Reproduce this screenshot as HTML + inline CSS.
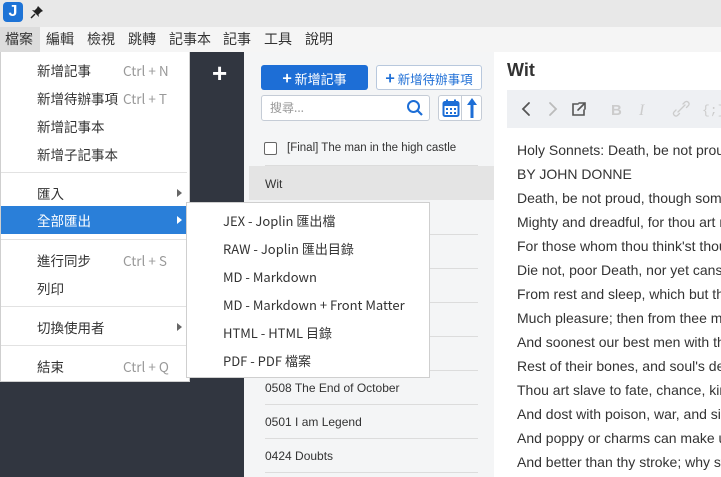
<!DOCTYPE html>
<html><head><meta charset="utf-8"><style>
*{margin:0;padding:0;box-sizing:border-box}
body{width:721px;height:477px;overflow:hidden;position:relative;background:#fff;font-family:"Liberation Sans","Noto Sans CJK TC",sans-serif}
.abs{position:absolute}
.menu{font-family:"Noto Sans CJK TC","Liberation Sans",sans-serif;font-size:13.5px;color:#333}
.mi{position:absolute;left:0;height:28px;line-height:28px;padding-left:36px;white-space:nowrap}
.sc{position:absolute;left:122px;color:#999}
.sep{position:absolute;left:0;height:1px;background:#e2e2e2}
.arr{position:absolute;left:176px;width:0;height:0;border-left:5px solid #666;border-top:4px solid transparent;border-bottom:4px solid transparent}
.row{position:absolute;left:265px;width:213px;height:1px;background:#dcdcdc}
.nt{position:absolute;left:265px;font-size:12px;color:#333;white-space:nowrap}
.ed{position:absolute;left:23px;font-size:14px;color:#333;white-space:nowrap;line-height:24px}
.mb span{position:absolute;white-space:nowrap}
</style></head><body>
<div class="abs" style="left:0;top:0;width:721px;height:27px;background:#e8e8e8"></div>
<div class="abs" style="left:3px;top:2px;width:20px;height:20px;background:#1d73d6;border-radius:4px;color:#fff;font:bold 16px 'Liberation Sans';text-align:center;line-height:20px">J</div>
<svg class="abs" style="left:30px;top:5px" width="14" height="14"><path d="M8 1 L13 6 L11 7 L8.5 9.5 L9 12 L2 5 L4.5 5.5 L7 3 Z" fill="#222"/><line x1="5" y1="9" x2="1" y2="13" stroke="#222" stroke-width="1.5"/></svg>
<div class="abs" style="left:0;top:27px;width:721px;height:25px;background:#f5f5f5"></div>
<div class="abs" style="left:0;top:27px;width:40px;height:25px;background:#dcdcdc"></div>
<div class="abs menu mb" style="top:29px;left:5px;font-size:14px;width:400px;height:20px">
<span style="left:0">檔案</span><span style="left:41px">編輯</span><span style="left:82px">檢視</span><span style="left:123px">跳轉</span><span style="left:164px">記事本</span><span style="left:218px">記事</span><span style="left:259px">工具</span><span style="left:300px">說明</span></div>
<div class="abs" style="left:0;top:52px;width:244px;height:425px;background:#313640"></div>
<div class="abs" style="left:212px;top:58px;color:#fff;font:bold 26px 'Liberation Sans';line-height:30px">+</div>
<div class="abs" style="left:244px;top:52px;width:5px;height:425px;background:#f4f5f6"></div>
<div class="abs" style="left:249px;top:52px;width:245px;height:425px;background:#f4f5f6"></div>
<div class="abs" style="left:261px;top:65px;width:107px;height:25px;background:#1d6ed6;border-radius:3px;color:#fff;font-size:13px;line-height:25px;text-align:center;font-family:'Noto Sans CJK TC',sans-serif;white-space:nowrap"><b style="font-size:16px">+</b> 新增記事</div>
<div class="abs" style="left:376px;top:65px;width:106px;height:25px;background:#fff;border:1px solid #b8c8dd;border-radius:3px;color:#1d6ed6;font-size:12.5px;line-height:23px;text-align:center;font-family:'Noto Sans CJK TC',sans-serif;white-space:nowrap"><b style="font-size:16px">+</b> 新增待辦事項</div>
<div class="abs" style="left:261px;top:95px;width:169px;height:26px;background:#fff;border:1px solid #c5ccd6;border-radius:3px;color:#999;font-size:12px;line-height:24px;padding-left:8px;font-family:'Noto Sans CJK TC',sans-serif">搜尋...</div>
<svg class="abs" style="left:406px;top:99px" width="18" height="18"><circle cx="7.5" cy="7.5" r="5.5" fill="none" stroke="#1d6ed6" stroke-width="2"/><line x1="11.5" y1="11.5" x2="16" y2="16" stroke="#1d6ed6" stroke-width="2.2"/></svg>
<div class="abs" style="left:438px;top:95px;width:44px;height:26px;background:#fff;border:1px solid #c5ccd6;border-radius:3px"></div>
<div class="abs" style="left:461px;top:96px;width:1px;height:24px;background:#c5ccd6"></div>
<svg class="abs" style="left:442px;top:99px" width="18" height="18"><rect x="1.5" y="3" width="15" height="14" rx="1.5" fill="none" stroke="#1d6ed6" stroke-width="2"/><rect x="1.5" y="3" width="15" height="4" fill="#1d6ed6"/><line x1="5" y1="0.5" x2="5" y2="4" stroke="#1d6ed6" stroke-width="2"/><line x1="13" y1="0.5" x2="13" y2="4" stroke="#1d6ed6" stroke-width="2"/><g fill="#1d6ed6"><rect x="4" y="9" width="2" height="2"/><rect x="8" y="9" width="2" height="2"/><rect x="12" y="9" width="2" height="2"/><rect x="4" y="13" width="2" height="2"/><rect x="8" y="13" width="2" height="2"/><rect x="12" y="13" width="2" height="2"/></g></svg>
<svg class="abs" style="left:465px;top:97px" width="14" height="22"><path d="M7 1 L12 8 H8.5 V21 H5.5 V8 H2 Z" fill="#1d6ed6"/></svg>
<div class="abs" style="left:264px;top:142px;width:13px;height:13px;border:1px solid #666;border-radius:2px;background:#fff"></div>
<div class="nt" style="left:287px;top:142px;font-size:11.5px">[Final] The man in the high castle</div>
<div class="abs" style="left:249px;top:166px;width:245px;height:34px;background:#e4e4e4"></div>
<div class="row" style="top:165px"></div>
<div class="nt" style="top:177px">Wit</div>
<div class="row" style="top:234px"></div><div class="row" style="top:268px"></div><div class="row" style="top:302px"></div><div class="row" style="top:336px"></div><div class="row" style="top:370px"></div><div class="row" style="top:404px"></div><div class="row" style="top:438px"></div><div class="row" style="top:472px"></div>
<div class="nt" style="top:381px">0508 The End of October</div>
<div class="nt" style="top:415px">0501 I am Legend</div>
<div class="nt" style="top:449px">0424 Doubts</div>
<div class="abs" style="left:494px;top:52px;width:227px;height:425px;overflow:hidden">
<div class="abs" style="left:13px;top:8px;font:bold 18px 'Liberation Sans';color:#333">Wit</div>
<div class="abs" style="left:13px;top:38px;width:214px;height:38px;background:#eef0f3"></div>
<svg class="abs" style="left:21px;top:48px" width="206" height="18" fill="none" stroke-width="1.8" stroke-linecap="round">
<path d="M14 3 L8 9 L14 15" stroke="#555"/><path d="M35 3 L41 9 L35 15" stroke="#bbb"/>
<path d="M63 4 H58 V15 H69 V10 M64 3 H70 V9 M70 3 L63 10" stroke="#555" stroke-width="1.6"/>
<text x="96" y="15" font-family="Liberation Sans" font-weight="bold" font-size="15" fill="#ccc" stroke="none">B</text>
<text x="124" y="15" font-family="Liberation Serif" font-style="italic" font-size="16" fill="#ccc" stroke="none">I</text>
<path d="M163 12 L170 5 M161 10 l-2 2 a2.5 2.5 0 0 0 3.5 3.5 l2 -2 M168 4 l2-2 a2.5 2.5 0 0 1 3.5 3.5 l-2 2" stroke="#ccc" stroke-width="1.3"/>
<text x="187" y="14" font-family="Liberation Mono" font-size="13" fill="#ccc" stroke="none">{;}</text>
</svg>
<div class="ed" style="top:86px">Holy Sonnets: Death, be not proud</div>
<div class="ed" style="top:110px">BY JOHN DONNE</div>
<div class="ed" style="top:134px">Death, be not proud, though some have called thee</div>
<div class="ed" style="top:158px">Mighty and dreadful, for thou art not so;</div>
<div class="ed" style="top:182px">For those whom thou think'st thou dost overthrow</div>
<div class="ed" style="top:206px">Die not, poor Death, nor yet canst thou kill me.</div>
<div class="ed" style="top:230px">From rest and sleep, which but thy pictures be,</div>
<div class="ed" style="top:254px">Much pleasure; then from thee much more must flow,</div>
<div class="ed" style="top:278px">And soonest our best men with thee do go,</div>
<div class="ed" style="top:302px">Rest of their bones, and soul's delivery.</div>
<div class="ed" style="top:326px">Thou art slave to fate, chance, kings, and desperate men,</div>
<div class="ed" style="top:350px">And dost with poison, war, and sickness dwell,</div>
<div class="ed" style="top:374px">And poppy or charms can make us sleep as well</div>
<div class="ed" style="top:398px">And better than thy stroke; why swell'st thou then?</div>
</div>
<div class="abs menu" style="left:0;top:52px;width:190px;height:330px;background:#fff;border:1px solid #cfcfcf;border-top:none">
<div class="mi" style="top:4px">新增記事<span class="sc">Ctrl + N</span></div>
<div class="mi" style="top:32px">新增待辦事項<span class="sc">Ctrl + T</span></div>
<div class="mi" style="top:60px">新增記事本</div>
<div class="mi" style="top:88px">新增子記事本</div>
<div class="sep" style="top:120px;width:186px"></div>
<div class="mi" style="top:127px;width:186px">匯入<span class="arr" style="top:10px"></span></div>
<div class="mi" style="top:154px;width:186px;background:#2a7fd9;color:#fff">全部匯出<span class="arr" style="top:10px;border-left-color:#fff"></span></div>
<div class="sep" style="top:187px;width:186px"></div>
<div class="mi" style="top:194px">進行同步<span class="sc">Ctrl + S</span></div>
<div class="mi" style="top:222px">列印</div>
<div class="sep" style="top:254px;width:186px"></div>
<div class="mi" style="top:261px;width:186px">切換使用者<span class="arr" style="top:10px"></span></div>
<div class="sep" style="top:293px;width:186px"></div>
<div class="mi" style="top:300px">結束<span class="sc">Ctrl + Q</span></div>
</div>
<div class="abs menu" style="left:186px;top:202px;width:244px;height:176px;background:#fff;border:1px solid #cfcfcf;font-size:13px">
<div class="mi" style="top:4px">JEX - Joplin 匯出檔</div>
<div class="mi" style="top:32px">RAW - Joplin 匯出目錄</div>
<div class="mi" style="top:60px">MD - Markdown</div>
<div class="mi" style="top:88px">MD - Markdown + Front Matter</div>
<div class="mi" style="top:116px">HTML - HTML 目錄</div>
<div class="mi" style="top:144px">PDF - PDF 檔案</div>
</div>
</body></html>
